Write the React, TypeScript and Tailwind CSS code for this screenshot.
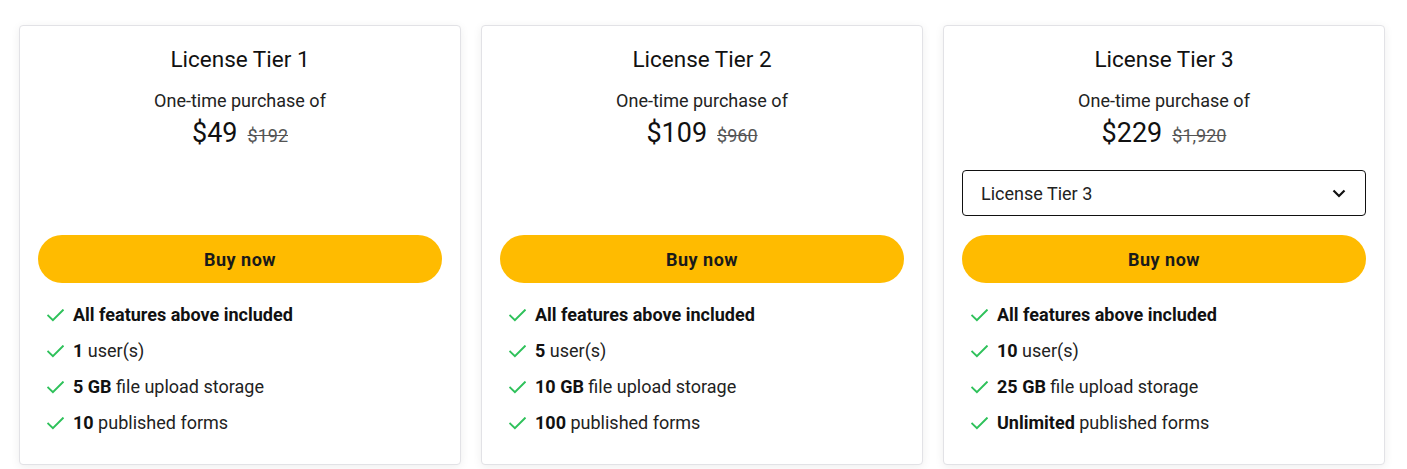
import { Fragment } from 'react'

interface Feature {
  bold: string
  rest: string
}

interface Tier {
  name: string
  price: string
  was: string
  select?: boolean
  features: Feature[]
}

const tiers: Tier[] = [
  {
    name: 'License Tier 1',
    price: '$49',
    was: '$192',
    features: [
      { bold: 'All features above included', rest: '' },
      { bold: '1', rest: ' user(s)' },
      { bold: '5 GB', rest: ' file upload storage' },
      { bold: '10', rest: ' published forms' },
    ],
  },
  {
    name: 'License Tier 2',
    price: '$109',
    was: '$960',
    features: [
      { bold: 'All features above included', rest: '' },
      { bold: '5', rest: ' user(s)' },
      { bold: '10 GB', rest: ' file upload storage' },
      { bold: '100', rest: ' published forms' },
    ],
  },
  {
    name: 'License Tier 3',
    price: '$229',
    was: '$1,920',
    select: true,
    features: [
      { bold: 'All features above included', rest: '' },
      { bold: '10', rest: ' user(s)' },
      { bold: '25 GB', rest: ' file upload storage' },
      { bold: 'Unlimited', rest: ' published forms' },
    ],
  },
]

function CheckIcon(): React.JSX.Element {
  return (
    <svg width="17" height="13" viewBox="0 0 17 13" fill="none" className="shrink-0">
      <path d="M1.2 6.6 L5.9 11.2 L15.8 1.3" stroke="#2ec15a" strokeWidth="2" strokeLinecap="square" />
    </svg>
  )
}

function TierCard({ tier }: { tier: Tier }): React.JSX.Element {
  return (
    <div className="flex flex-col rounded-[4px] border border-[#e2e2e6] bg-white px-[18px] pt-[19px] pb-[29px] shadow-[0_2px_10px_rgba(0,0,0,0.07)]">
      <h2 className="text-center text-[22.5px] leading-[28px] text-[#111]">{tier.name}</h2>
      <p className="mt-[16px] text-center text-[18px] leading-[24px] text-[#222]">One-time purchase of</p>
      <div className="mt-[4px] flex items-baseline justify-center gap-[10px]">
        <span className="text-[27px] leading-[32px] text-[#111]">{tier.price}</span>
        <span className="text-[18px] leading-[24px] text-[#555] line-through">{tier.was}</span>
      </div>
      <div className="mt-[21px] h-[46px]">
        {tier.select && (
          <div className="flex h-full items-center justify-between rounded-[4px] border border-[#111] pr-[19px] pl-[18px] text-[18px] text-[#222]">
            <span>{tier.name}</span>
            <svg width="14" height="9" viewBox="0 0 14 9" fill="none">
              <path d="M1.5 1.5 L7 7 L12.5 1.5" stroke="#111" strokeWidth="2.2" />
            </svg>
          </div>
        )}
      </div>
      <button
        type="button"
        className="mt-[19px] h-[48px] w-full rounded-full bg-[#ffbb00] text-[18px] font-bold tracking-[0.5px] text-[#1a1a1a]"
      >
        Buy now
      </button>
      <ul className="mt-[20px] flex flex-col gap-[12px] pl-[9px]">
        {tier.features.map((feature, index) => (
          <li key={index} className="flex items-center gap-[9px] text-[18px] leading-[24px] text-[#222]">
            <CheckIcon />
            <span>
              <b className="font-bold text-[#111]">{feature.bold}</b>
              {feature.rest && <Fragment>{feature.rest}</Fragment>}
            </span>
          </li>
        ))}
      </ul>
    </div>
  )
}

export default function App(): React.JSX.Element {
  return (
    <div className="min-h-[469px] bg-white pt-[25px] pr-[22px] pl-[19px] font-['Roboto',sans-serif]">
      <div className="grid grid-cols-3 gap-[20px]">
        {tiers.map((tier) => (
          <TierCard key={tier.name} tier={tier} />
        ))}
      </div>
    </div>
  )
}
